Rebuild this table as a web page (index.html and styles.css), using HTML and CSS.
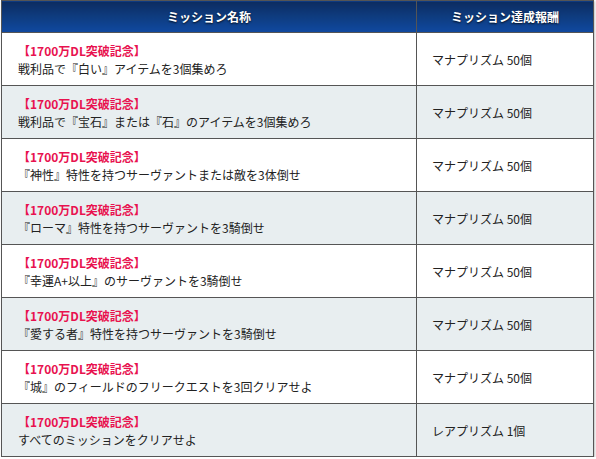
FILE: index.html
```html
<!DOCTYPE html>
<html lang="ja">
<head>
<meta charset="utf-8">
<link rel="stylesheet" href="styles.css">
</head>
<body>
<table class="missions">
  <thead>
    <tr><th class="col-name">ミッション名称</th><th class="col-reward">ミッション達成報酬</th></tr>
  </thead>
  <tbody>
    <tr><td class="name"><span class="tag">【1700万DL突破記念】</span><br>戦利品で『白い』アイテムを3個集めろ</td><td class="reward">マナプリズム 50個</td></tr>
    <tr class="alt"><td class="name"><span class="tag">【1700万DL突破記念】</span><br>戦利品で『宝石』または『石』のアイテムを3個集めろ</td><td class="reward">マナプリズム 50個</td></tr>
    <tr><td class="name"><span class="tag">【1700万DL突破記念】</span><br>『神性』特性を持つサーヴァントまたは敵を3体倒せ</td><td class="reward">マナプリズム 50個</td></tr>
    <tr class="alt"><td class="name"><span class="tag">【1700万DL突破記念】</span><br>『ローマ』特性を持つサーヴァントを3騎倒せ</td><td class="reward">マナプリズム 50個</td></tr>
    <tr><td class="name"><span class="tag">【1700万DL突破記念】</span><br>『幸運A+以上』のサーヴァントを3騎倒せ</td><td class="reward">マナプリズム 50個</td></tr>
    <tr class="alt"><td class="name"><span class="tag">【1700万DL突破記念】</span><br>『愛する者』特性を持つサーヴァントを3騎倒せ</td><td class="reward">マナプリズム 50個</td></tr>
    <tr><td class="name"><span class="tag">【1700万DL突破記念】</span><br>『城』のフィールドのフリークエストを3回クリアせよ</td><td class="reward">マナプリズム 50個</td></tr>
    <tr class="alt"><td class="name"><span class="tag">【1700万DL突破記念】</span><br>すべてのミッションをクリアせよ</td><td class="reward">レアプリズム 1個</td></tr>
  </tbody>
</table>
</body>
</html>
```
FILE: styles.css
```css
html, body {
  margin: 0;
  padding: 0;
  background: #ffffff;
}
body {
  font-family: "Noto Sans CJK JP", "Noto Sans", sans-serif;
  font-size: 12px;
  color: #222222;
}
.missions {
  margin-left: 1px;
  width: 593px;
  border-collapse: collapse;
  border: 1px solid #555555;
  box-shadow: 1px 1px 2px rgba(0, 0, 0, 0.25);
  table-layout: fixed;
}
.missions th {
  height: 32px;
  padding: 0;
  box-sizing: border-box;
  background: linear-gradient(to bottom, #0c2c60 0%, #0e3c80 50%, #1049a0 100%);
  color: #ffffff;
  font-weight: bold;
  font-size: 12px;
  line-height: 14px;
  text-align: center;
  text-shadow: 0 1px 2px rgba(0, 0, 0, 0.8);
  border: 1px solid #555555;
}
.col-name { width: 415px; }
.missions td {
  height: 53px;
  padding: 0;
  border: 1px solid #555555;
  vertical-align: middle;
  line-height: 18px;
  box-sizing: border-box;
}
.missions td.name {
  padding: 1px 0 0 16px;
}
.missions td.reward {
  padding: 1px 0 0 15px;
}
.missions tr.alt td {
  background: #e8eef0;
}
.tag {
  color: #e8124f;
  font-weight: bold;
}
```
